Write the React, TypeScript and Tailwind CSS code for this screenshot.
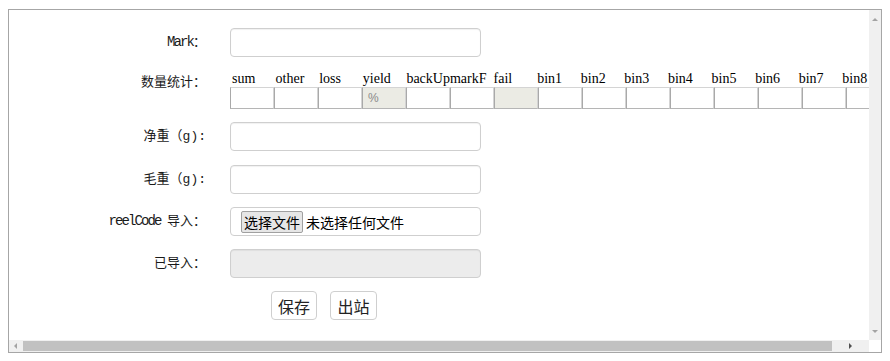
import React from "react";

const labelFont = "font-['Liberation_Mono','Noto_Sans_CJK_SC',monospace]";
const cjkFont = "font-['Noto_Sans_CJK_SC','Liberation_Sans',sans-serif]";

const columns = [
  "sum", "other", "loss", "yield", "backUp", "markF", "fail",
  "bin1", "bin2", "bin3", "bin4", "bin5", "bin6", "bin7", "bin8",
];

// latin part of a label: SimSun-like half width
function Latin({ children }: { children: React.ReactNode }) {
  return <span className="text-[14px] tracking-[-1.9px]">{children}</span>;
}

function Label({ children, className = "" }: { children: React.ReactNode; className?: string }) {
  return (
    <div className={`w-[197px] shrink-0 text-right text-[13px] leading-[17px] text-[#1a1a1a] ${labelFont} ${className}`}>
      {children}
    </div>
  );
}

function TextBox({ disabled = false }: { disabled?: boolean }) {
  return (
    <div
      className={`ml-[24px] h-[29px] w-[251px] shrink-0 rounded-[4px] border border-[#cfcfcf] shadow-[inset_0_1px_1px_rgba(0,0,0,0.06)] ${
        disabled ? "bg-[#ececec]" : "bg-white"
      }`}
    />
  );
}

function Arrow({ dir }: { dir: "up" | "down" | "left" | "right" }) {
  const pts = {
    up: "1,5 4,2 7,5",
    down: "1,2 4,5 7,2",
    left: "5,1 2,4 5,7",
    right: "2,1 5,4 2,7",
  }[dir];
  return (
    <svg width="8" height="8" viewBox="0 0 8 8">
      <polygon points={pts} fill={dir === "right" ? "#505050" : "#a3a3a3"} />
    </svg>
  );
}

export default function App() {
  return (
    <div className="h-[361px] w-[890px] bg-white pl-[8px] pt-[9px]">
      <div className="flex h-[344px] w-[874px] flex-col border border-[#a6a6a6] bg-white">
        <div className="flex min-h-0 flex-1">
          {/* scrolled content */}
          <div className="min-w-0 flex-1 overflow-hidden pt-[18px]">
            {/* Mark */}
            <div className="flex items-center">
              <Label>
                <Latin>Mark</Latin>：
              </Label>
              <TextBox />
            </div>

            {/* 数量统计 */}
            <div className="mt-[13px] flex items-start">
              <Label className="pt-[4px]">数量统计：</Label>
              <div className="ml-[24px] shrink-0">
                <div className="flex pl-[2px] font-['Liberation_Serif',serif] text-[14px] leading-[17px] text-black">
                  {columns.map((c) => (
                    <div key={c} className="w-[43.6px] shrink-0 overflow-visible whitespace-nowrap">
                      {c}
                    </div>
                  ))}
                </div>
                <div className="flex">
                  {columns.map((c) => (
                    <div
                      key={c}
                      className={`flex h-[22px] w-[44px] shrink-0 items-center border border-t-[#d4d4d4] border-r-[#d4d4d4] border-b-[#b5b5b5] border-l-[#a9a9a9] pl-[5px] text-[12px] text-[#8a8a8a] ${
                        c === "yield" || c === "fail" ? "bg-[#ebebe4]" : "bg-white"
                      } font-['Liberation_Sans',sans-serif]`}
                    >
                      {c === "yield" ? "%" : ""}
                    </div>
                  ))}
                </div>
              </div>
            </div>

            {/* 净重 */}
            <div className="mt-[13px] flex items-center">
              <Label>净重（g):</Label>
              <TextBox />
            </div>

            {/* 毛重 */}
            <div className="mt-[14px] flex items-center">
              <Label>毛重（g):</Label>
              <TextBox />
            </div>

            {/* reelCode */}
            <div className="mt-[13px] flex items-center">
              <Label>
                <Latin>reelCode </Latin>导入：
              </Label>
              <div className="ml-[24px] flex h-[29px] w-[251px] shrink-0 items-center rounded-[4px] border border-[#cfcfcf] bg-white pl-[10px]">
                <span
                  className={`h-[22px] rounded-[2px] border border-[#a0a0a0] bg-[#e6e6e6] px-[2px] text-[14px] leading-[20px] text-black ${cjkFont}`}
                >
                  选择文件
                </span>
                <span className={`ml-[3px] text-[14px] leading-[20px] text-black ${cjkFont}`}>未选择任何文件</span>
              </div>
            </div>

            {/* 已导入 */}
            <div className="mt-[13px] flex items-center">
              <Label>已导入：</Label>
              <TextBox disabled />
            </div>

            {/* actions */}
            <div className="mt-[13px] flex gap-[13px] pl-[262px]">
              <button
                className={`h-[29px] w-[46px] rounded-[4px] border border-[#cfcfcf] bg-white text-[16px] text-[#222] ${cjkFont}`}
              >
                保存
              </button>
              <button
                className={`h-[29px] w-[47px] rounded-[4px] border border-[#cfcfcf] bg-white text-[16px] text-[#222] ${cjkFont}`}
              >
                出站
              </button>
            </div>
          </div>

          {/* vertical scrollbar */}
          <div className="flex w-[12px] shrink-0 flex-col items-center justify-between bg-[#f0f0f0] pt-[6px] pb-[4px]">
            <Arrow dir="up" />
            <Arrow dir="down" />
          </div>
        </div>

        {/* horizontal scrollbar */}
        <div className="flex h-[12px] shrink-0">
          <div className="flex flex-1 items-center bg-[#f0f0f0]">
            <div className="flex w-[14px] justify-center">
              <Arrow dir="left" />
            </div>
            <div className="h-[10px] w-[809px] bg-[#c1c1c1]" />
            <div className="flex flex-1 justify-center">
              <Arrow dir="right" />
            </div>
          </div>
          <div className="w-[12px] bg-white" />
        </div>
      </div>
    </div>
  );
}
